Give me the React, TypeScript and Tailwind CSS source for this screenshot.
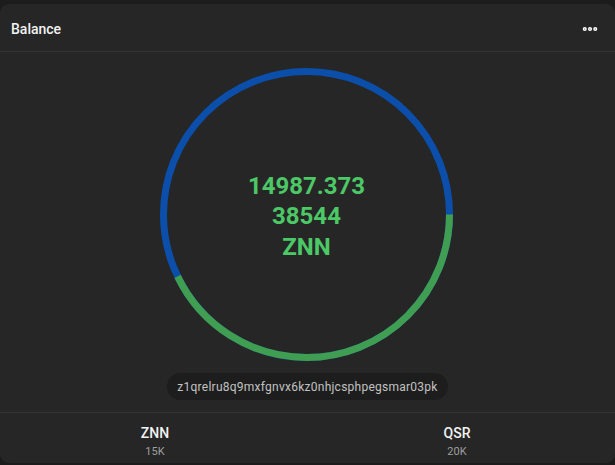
import { MoreHorizontal } from "lucide-react";

const R = 143;
const C = 2 * Math.PI * R;

const balances = [
  { symbol: "ZNN", amount: "15K", value: 15, color: "#3f9e52" },
  { symbol: "QSR", amount: "20K", value: 20, color: "#0b4fab" },
];

const BalanceRing = () => {
  const total = balances.reduce((s, b) => s + b.value, 0);
  const znnLen = (balances[0].value / total) * C;
  return (
    <div className="relative w-[293px] h-[293px] mr-[2px]">
      <svg width="293" height="293" viewBox="0 0 293 293" className="block">
        <circle cx="146.5" cy="146.5" r={R} fill="none" stroke="#0b4fab" strokeWidth="7" />
        <circle
          cx="146.5"
          cy="146.5"
          r={R}
          fill="none"
          stroke="#3f9e52"
          strokeWidth="7"
          strokeDasharray={`${znnLen} ${C}`}
        />
      </svg>
      <div className="absolute inset-0 pt-[4px] flex flex-col items-center justify-center text-[24px] leading-[30.5px] font-bold text-[#4cc866]">
        <span>14987.373</span>
        <span>38544</span>
        <span>ZNN</span>
      </div>
    </div>
  );
};

export default function App() {
  return (
    <div
      className="w-[615px] h-[465px] bg-[#1c1c1c] pt-[4px] overflow-hidden"
      style={{ fontFamily: "Roboto, 'Noto Sans', sans-serif" }}
    >
      <div className="h-[459px] bg-[#262626] rounded-[9px] flex flex-col">
        <div className="h-[48px] flex items-center justify-between pt-[3px] pl-[11px] pr-[16px] border-b border-[#343434]">
          <span className="text-[14px] font-medium text-[#f2f2f2]">Balance</span>
          <MoreHorizontal size={18} strokeWidth={3.5} className="text-white" />
        </div>
        <div className="flex flex-col items-center pt-[16px] pb-[12px] border-b border-[#343434]">
          <BalanceRing />
          <div className="mt-[12px] h-[27px] px-[10px] rounded-full bg-[#1d1d1d] flex items-center text-[12px] tracking-[0.25px] text-[#c2c2c2]">
            z1qrelru8q9mxfgnvx6kz0nhjcsphpegsmar03pk
          </div>
        </div>
        <div className="flex pt-[11px] pl-[4px] pr-[7px]">
          {balances.map((b) => (
            <div key={b.symbol} className="flex-1 flex flex-col items-center">
              <span className="text-[14px] font-medium leading-[18px] text-[#f2f2f2]">{b.symbol}</span>
              <span className="text-[11px] leading-[16px] mt-[2px] text-[#9e9e9e]">{b.amount}</span>
            </div>
          ))}
        </div>
      </div>
    </div>
  );
}
